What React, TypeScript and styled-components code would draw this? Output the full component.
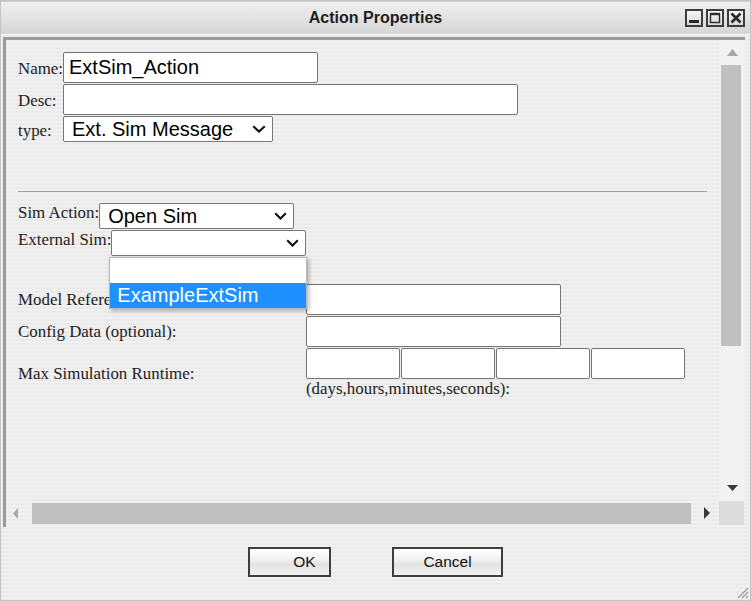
import React from "react";
import styled, { createGlobalStyle } from "styled-components";

const GlobalStyle = createGlobalStyle`
  html, body { margin: 0; padding: 0; background: #f0f0f0; }
  body { font-family: "Liberation Serif", "Times New Roman", serif; }
  * { box-sizing: border-box; }
`;

const stripes = `repeating-linear-gradient(to bottom, #f1f1f1 0px, #f1f1f1 2px, #eaeaea 2px, #eaeaea 4px)`;

const Window = styled.div`
  position: relative;
  width: 751px;
  height: 601px;
  border: 1px solid #c4c4c4;
  background: ${stripes};
  display: flex;
  flex-direction: column;
  overflow: hidden;
`;

const TitleBar = styled.div`
  height: 34px;
  display: grid;
  grid-template-columns: 1fr auto 1fr;
  align-items: center;
  background: linear-gradient(to bottom, #f0f0f0, #d5d5d5);
  border-top: 1px solid #cfcfcf;
  border-bottom: 1px solid #f8f8f8;
`;

const Title = styled.div`
  grid-column: 2;
  font-family: "Liberation Sans", Arial, sans-serif;
  font-weight: bold;
  font-size: 16px;
  color: #1e1e1e;
`;

const WinButtons = styled.div`
  grid-column: 3;
  justify-self: end;
  display: flex;
  gap: 3px;
  padding-right: 5px;
`;

const WinButton = styled.div`
  width: 18px;
  height: 18px;
  border: 2px solid #3c3c3c;
  background: linear-gradient(to bottom, #f6f6f6, #d8d8d8);
  display: flex;
`;

const Panel = styled.div`
  margin: 2px 5px 0 2px;
  height: 490px;
  border-top: 3px solid #9a9a9a;
  border-left: 3px solid #9a9a9a;
  padding-bottom: 2px;
  display: grid;
  grid-template-columns: 1fr 26px;
  grid-template-rows: 1fr 24px;
`;

const Content = styled.div`
  position: relative;
  padding: 12px 0 0 12px;
  overflow: hidden;
`;

const TopGrid = styled.div`
  display: grid;
  grid-template-columns: 45px auto;
  row-gap: 1px;
  align-items: baseline;
  justify-items: start;
`;

const Label = styled.span`
  font-family: "Liberation Serif", "Times New Roman", serif;
  font-size: 16.9px;
  color: #222;
  white-space: nowrap;
`;

const TextField = styled.input<{ $w: number }>`
  width: ${(p) => p.$w}px;
  height: 31px;
  margin: 0;
  padding: 0 5px;
  border: 1px solid #767676;
  border-radius: 2px;
  background: #fff;
  font-family: "Liberation Sans", Arial, sans-serif;
  font-size: 20px;
  color: #000;
  outline: none;
`;

const SelectBox = styled.div<{ $w: number }>`
  display: inline-flex;
  align-items: center;
  justify-content: space-between;
  width: ${(p) => p.$w}px;
  height: 26px;
  padding: 0 6px 0 8px;
  border: 1px solid #767676;
  border-radius: 2px;
  background: #fff;
  font-family: "Liberation Sans", Arial, sans-serif;
  font-size: 20px;
  line-height: 1;
  color: #000;
`;

const Divider = styled.div`
  width: 689px;
  height: 1px;
  margin-top: 49px;
  background: #a0a0a0;
`;

const SimRows = styled.div`
  margin-top: 11px;
  display: flex;
  flex-direction: column;
  gap: 1px;
`;

const SimRow = styled.div`
  display: flex;
  align-items: flex-start;
`;

const SelectWrap = styled.div`
  position: relative;
  display: flex;
`;

const Popup = styled.div`
  position: absolute;
  left: -2px;
  top: 27px;
  width: 198px;
  z-index: 5;
  background: #fff;
  border: 1px solid #b5b5b5;
  box-shadow: 2px 2px 4px rgba(0, 0, 0, 0.28);
  display: flex;
  flex-direction: column;
`;

const Option = styled.div<{ $active?: boolean }>`
  height: 25px;
  padding-left: 7px;
  display: flex;
  align-items: center;
  font-family: "Liberation Sans", Arial, sans-serif;
  font-size: 20px;
  color: ${(p) => (p.$active ? "#fff" : "#000")};
  background: ${(p) => (p.$active ? "#1e90ff" : "#fff")};
`;

const ModelGrid = styled.div`
  margin-top: 28px;
  display: grid;
  grid-template-columns: 288px auto;
  row-gap: 1px;
  align-items: center;
  justify-items: start;
`;

const RuntimeCell = styled.div`
  display: flex;
  flex-direction: column;
`;

const RuntimeFields = styled.div`
  display: flex;
  gap: 1px;
`;

const VScroll = styled.div`
  background: #f2f2f2;
  display: flex;
  flex-direction: column;
  align-items: center;
  padding: 9px 0 10px;
`;

const VThumb = styled.div`
  align-self: flex-start;
  margin: 9px 0 0 2px;
  width: 20px;
  height: 281px;
  background: #c0c0c0;
`;

const Spacer = styled.div`
  flex: 1;
`;

const HScroll = styled.div`
  display: flex;
  align-items: center;
  padding: 0 9px 0 7px;
`;

const HThumb = styled.div`
  flex: 1;
  height: 21px;
  margin: 0 13px 0 14px;
  background: #c0c0c0;
`;

const Corner = styled.div`
  width: 25px;
  background: #dcdcdc;
`;

const ButtonBar = styled.div`
  margin-top: 20px;
  display: flex;
  justify-content: center;
  gap: 61px;
`;

const DialogButton = styled.button<{ $w: number; $indent?: number }>`
  width: ${(p) => p.$w}px;
  height: 30px;
  margin: 0;
  padding: 0 0 0 ${(p) => p.$indent ?? 0}px;
  border: 2px solid #3e3e3e;
  border-radius: 0;
  background: linear-gradient(to bottom, #ffffff 0%, #f1f1f1 40%, #e2e2e2 60%, #f3f3f3 100%);
  font-family: "Liberation Sans", Arial, sans-serif;
  font-size: 15.5px;
  color: #111;
`;

const Grip = styled.svg`
  position: absolute;
  right: 1px;
  bottom: 1px;
`;

const Chevron = ({ w = 13 }: { w?: number }) => (
  <svg width={w} height={8} viewBox={`0 0 ${w} 8`}>
    <path d={`M1.2 1.2 L${w / 2} 6.6 L${w - 1.2} 1.2`} fill="none" stroke="#111" strokeWidth={2.1} />
  </svg>
);

export default function App() {
  return (
    <>
      <GlobalStyle />
      <Window>
        <TitleBar>
          <Title>Action Properties</Title>
          <WinButtons>
            <WinButton>
              <svg width="14" height="14" viewBox="0 0 14 14">
                <rect x="2" y="9" width="10" height="3" fill="#2a2a2a" />
              </svg>
            </WinButton>
            <WinButton>
              <svg width="14" height="14" viewBox="0 0 14 14">
                <rect x="2.5" y="2.5" width="9" height="9" fill="none" stroke="#2a2a2a" strokeWidth="1.4" />
                <rect x="2" y="2" width="10" height="2.2" fill="#2a2a2a" />
              </svg>
            </WinButton>
            <WinButton>
              <svg width="14" height="14" viewBox="0 0 14 14">
                <path d="M2.5 2.5 L11.5 11.5 M11.5 2.5 L2.5 11.5" stroke="#2a2a2a" strokeWidth="2.6" />
              </svg>
            </WinButton>
          </WinButtons>
        </TitleBar>

        <Panel>
          <Content>
            <TopGrid>
              <Label>Name:</Label>
              <TextField $w={255} defaultValue="ExtSim_Action" readOnly />
              <Label>Desc:</Label>
              <TextField $w={455} defaultValue="" readOnly />
              <Label>type:</Label>
              <SelectBox $w={210}>
                <span>Ext. Sim Message</span>
                <Chevron w={14} />
              </SelectBox>
            </TopGrid>

            <Divider />

            <SimRows>
              <SimRow>
                <Label>Sim Action:</Label>
                <SelectBox $w={195}>
                  <span>Open Sim</span>
                  <Chevron />
                </SelectBox>
              </SimRow>
              <SimRow>
                <Label>External Sim:</Label>
                <SelectWrap>
                  <SelectBox $w={195}>
                    <span></span>
                    <Chevron />
                  </SelectBox>
                  <Popup>
                    <Option>&nbsp;</Option>
                    <Option $active>ExampleExtSim</Option>
                  </Popup>
                </SelectWrap>
              </SimRow>
            </SimRows>

            <ModelGrid>
              <Label>Model Reference Directory:</Label>
              <TextField $w={255} defaultValue="" readOnly />
              <Label>Config Data (optional):</Label>
              <TextField $w={255} defaultValue="" readOnly />
              <Label>Max Simulation Runtime:</Label>
              <RuntimeCell>
                <RuntimeFields>
                  <TextField $w={94} defaultValue="" readOnly />
                  <TextField $w={94} defaultValue="" readOnly />
                  <TextField $w={94} defaultValue="" readOnly />
                  <TextField $w={94} defaultValue="" readOnly />
                </RuntimeFields>
                <Label>(days,hours,minutes,seconds):</Label>
              </RuntimeCell>
            </ModelGrid>
          </Content>

          <VScroll>
            <svg width="11" height="7" viewBox="0 0 11 7">
              <path d="M0 7 L5.5 0 L11 7 Z" fill="#a8a8a8" />
            </svg>
            <VThumb />
            <Spacer />
            <svg width="11" height="6" viewBox="0 0 11 6">
              <path d="M0 0 L11 0 L5.5 6 Z" fill="#3a3a3a" />
            </svg>
          </VScroll>

          <HScroll>
            <svg width="5" height="11" viewBox="0 0 5 11">
              <path d="M5 0 L0 5.5 L5 11 Z" fill="#a8a8a8" />
            </svg>
            <HThumb />
            <svg width="6" height="12" viewBox="0 0 6 12">
              <path d="M0 0 L6 6 L0 12 Z" fill="#3a3a3a" />
            </svg>
          </HScroll>
          <Corner />
        </Panel>

        <ButtonBar>
          <DialogButton $w={83} $indent={30}>OK</DialogButton>
          <DialogButton $w={111}>Cancel</DialogButton>
        </ButtonBar>

        <Grip width="15" height="15" viewBox="0 0 15 15">
          <path d="M14 4 L4 14 M14 8 L8 14 M14 12 L12 14" stroke="#9a9a9a" strokeWidth="1.2" />
        </Grip>
      </Window>
    </>
  );
}
